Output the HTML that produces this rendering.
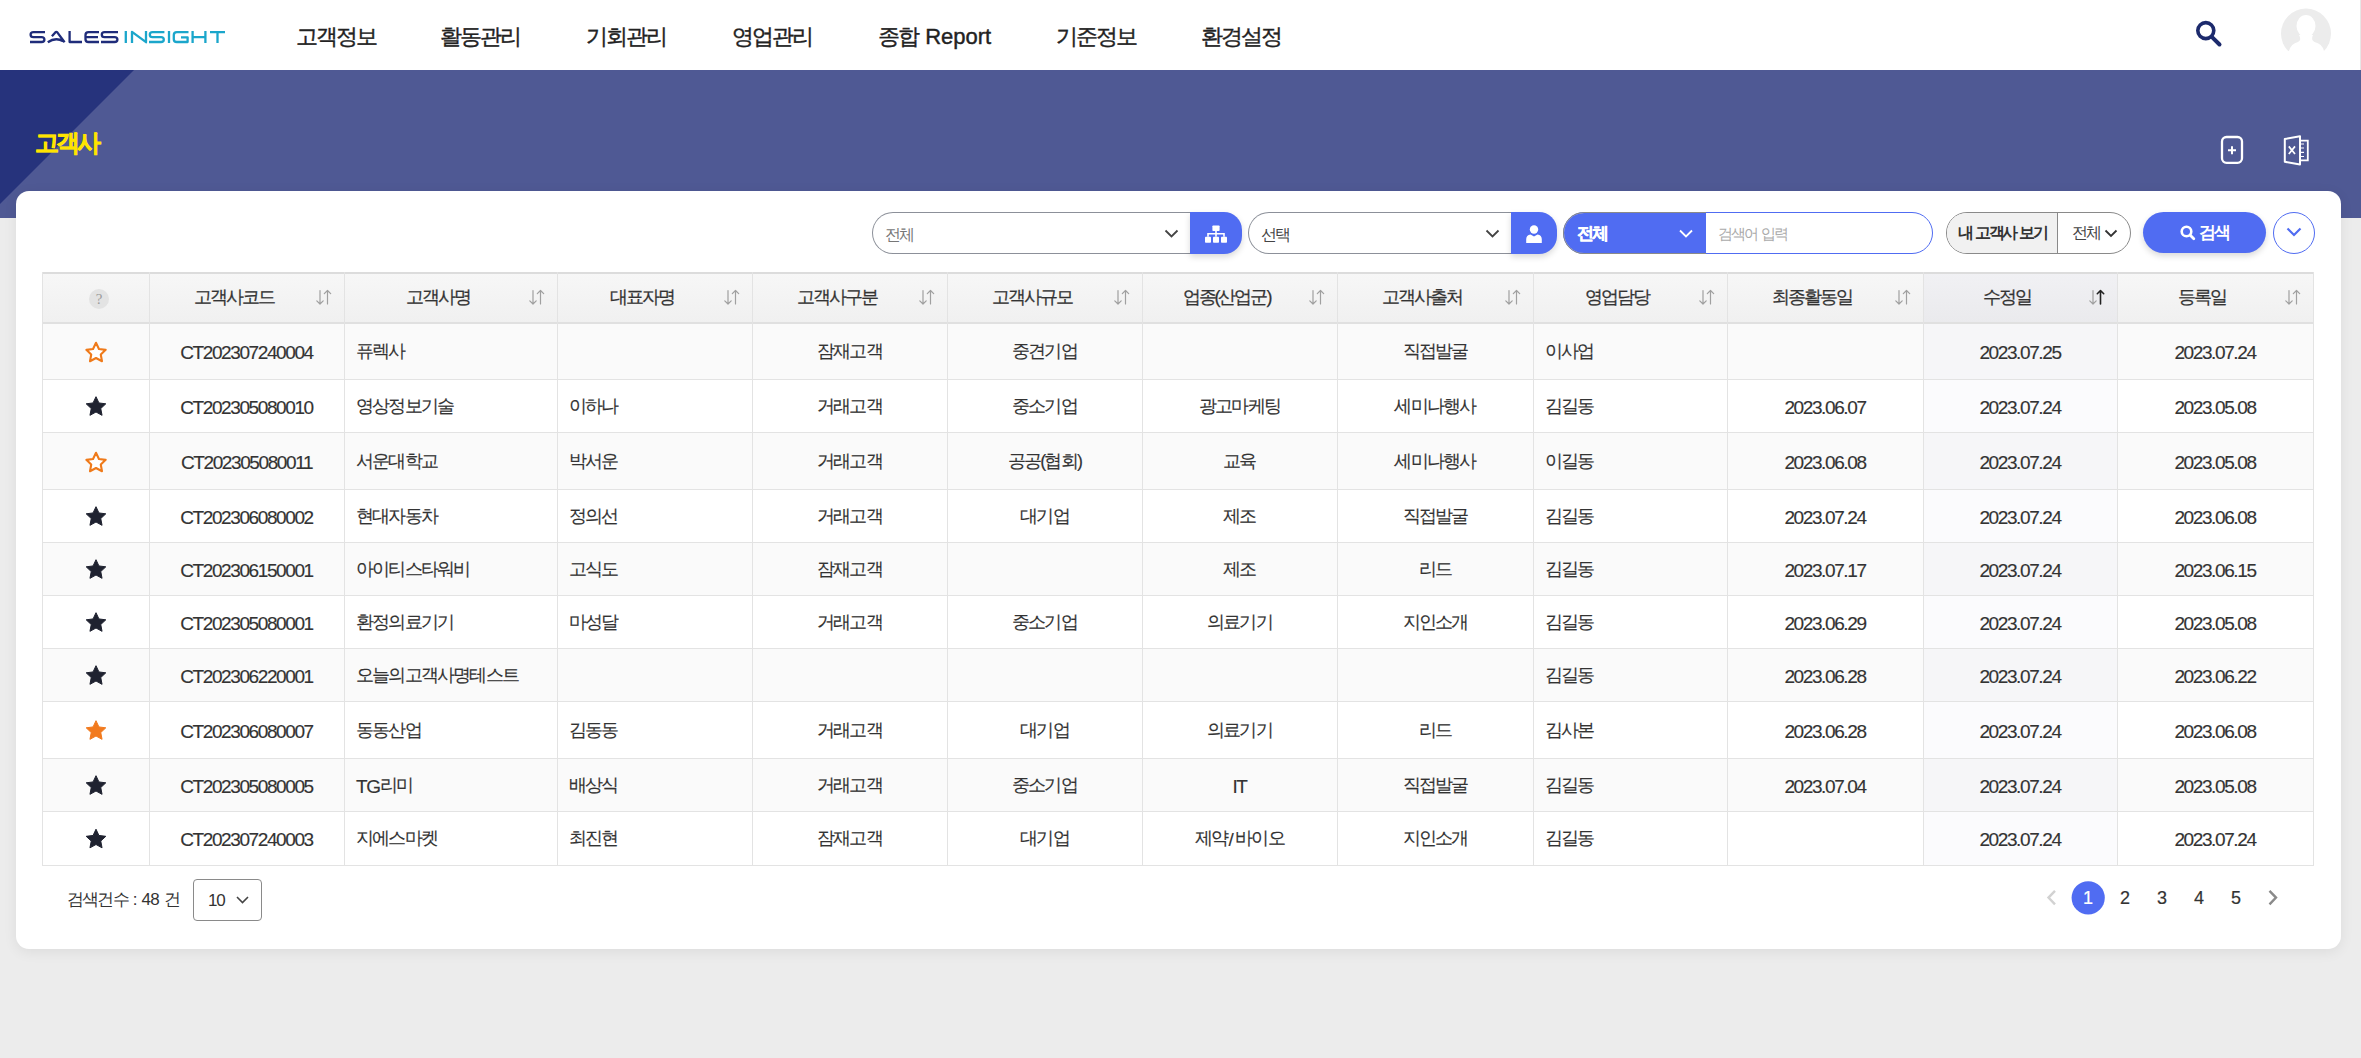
<!DOCTYPE html>
<html><head><meta charset="utf-8">
<style>
*{box-sizing:border-box;margin:0;padding:0}
html,body{width:2361px;height:1058px;overflow:hidden;background:#ececec;font-family:"Liberation Sans",sans-serif;color:#333}
.abs{position:absolute}
.a{letter-spacing:var(--la,0px)}
.sl{letter-spacing:0;margin:0 1.5px 0 1px;position:relative;top:2px;font-size:19px}
#hdr{position:absolute;left:0;top:0;width:2361px;height:70px;background:#fff}
.nav{position:absolute;top:22px;font-size:22px;color:#222;white-space:nowrap;line-height:30px;letter-spacing:-2px;--la:0px;word-spacing:3px;-webkit-text-stroke:0.4px #222}
#banner{position:absolute;left:0;top:70px;width:2361px;height:148px;background:#4f5994;overflow:hidden}
#tri{position:absolute;left:0;top:0;width:0;height:0;border-top:134px solid #26337c;border-right:134px solid transparent}
#title{position:absolute;left:35px;top:127.5px;font-size:23.5px;font-weight:bold;color:#ffe400;line-height:30px;letter-spacing:-3px;-webkit-text-stroke:0.6px #ffe400}
#card{position:absolute;left:16px;top:191px;width:2325px;height:758px;background:#fff;border-radius:13px;box-shadow:0 3px 14px rgba(0,0,0,.07)}
.fb{position:absolute;top:212px;height:42px}
.th{position:absolute;font-size:18px;line-height:24px;text-align:center;color:#333;white-space:nowrap;letter-spacing:-2px;-webkit-text-stroke:0.25px #333;--la:-1px}
.td{position:absolute;font-size:18px;line-height:24px;color:#333;white-space:nowrap;letter-spacing:-1.8px;--la:-1.4px;-webkit-text-stroke:0.15px #333}
.td .a{font-size:19px;position:relative;top:2px}
.pg{position:absolute;top:886px;-webkit-text-stroke:0.2px currentColor;font-size:18px;line-height:24px;color:#333;width:20px;text-align:center}
</style></head><body>
<div id="hdr"></div>
<div class="abs" style="left:2360px;top:0;width:1px;height:70px;background:#e6e6e6"></div>
<svg class="abs" style="left:0;top:0" width="240" height="70" viewBox="0 0 240 70">
<g fill="none" stroke-width="2.3" stroke-linecap="butt" stroke-linejoin="round">
<g stroke="#1f2c7a">
<path d="M45,32.2 H33.5 Q30.6,32.2 30.6,34.8 Q30.6,37.2 33.5,37.2 H41.5 Q44.4,37.2 44.4,39.7 Q44.4,42 41.5,42 H30"/>
<path d="M51.9,36.3 L55.3,32.4 Q56.3,31.4 57.3,32.4 L64.6,42.3 M47.8,42.3 Q55.5,36.8 63.2,41.2"/>
<path d="M69.6,31 V42 H82"/>
<path d="M99,32.2 H88.5 Q85.5,32.2 85.5,35 V39.2 Q85.5,42 88.5,42 H99 M86.5,37.2 H98"/>
<path d="M118,32.2 H104.5 Q101.8,32.2 101.8,34.8 Q101.8,37.2 104.5,37.2 H114.5 Q117.4,37.2 117.4,39.7 Q117.4,42 114.5,42 H101"/>
</g>
<g stroke="#1ba6cb">
<path d="M125.8,31 V43"/>
<path d="M132,43 V31.8 L146,42.2 V31"/>
<path d="M164.4,32.2 H152.5 Q149.8,32.2 149.8,34.8 Q149.8,37.2 152.5,37.2 H161 Q163.8,37.2 163.8,39.7 Q163.8,42 161,42 H149"/>
<path d="M169,31 V43"/>
<path d="M188.5,32.2 H176.8 Q173.8,32.2 173.8,35 V39.2 Q173.8,42 176.8,42 H187.6 V37.3 H181"/>
<path d="M192.6,31 V43 M205.4,31 V43 M192.6,37.2 H205.4"/>
<path d="M210,32.2 H225 M217.5,32.2 V43"/>
</g></g></svg>
<div class="nav" style="left:296px">고객정보</div>
<div class="nav" style="left:440px">활동관리</div>
<div class="nav" style="left:586px">기회관리</div>
<div class="nav" style="left:732px">영업관리</div>
<div class="nav" style="left:878px">종합 <span class="a">Report</span></div>
<div class="nav" style="left:1056px">기준정보</div>
<div class="nav" style="left:1201px">환경설정</div>
<svg class="abs" style="left:2180px;top:0" width="181" height="70" viewBox="2180 0 181 70">
<circle cx="2205.8" cy="30.6" r="8" fill="none" stroke="#1c2a6c" stroke-width="3.6"/>
<path d="M2211.8,36.8 L2219.5,44.5" stroke="#1c2a6c" stroke-width="4" stroke-linecap="round"/>
<defs><clipPath id="avc"><circle cx="2306" cy="33.6" r="25"/></clipPath></defs>
<g clip-path="url(#avc)">
<rect x="2281" y="8" width="50" height="43" fill="#ececec"/>
<rect x="2281" y="51" width="50" height="10" fill="#fff"/>
<ellipse cx="2306" cy="26" rx="9.5" ry="11" fill="#fff"/>
<path d="M2299,35 Q2302,40 2298,42 Q2291,43.5 2289,51 H2324 Q2322,43.5 2314.5,42 Q2310.5,40 2313,35 Z" fill="#fff"/>
</g>
</svg>
<div id="banner"><div id="tri"></div></div>
<div id="title">고객사</div>
<svg class="abs" style="left:2200px;top:120px" width="140" height="60" viewBox="2200 120 140 60">
<rect x="2222" y="137" width="20" height="25.8" rx="4.5" fill="none" stroke="#fff" stroke-width="2.3"/>
<path d="M2232,146.2 V154.2 M2228,150.2 H2236" stroke="#fff" stroke-width="2"/>
<path d="M2284.8,139 L2300,136.2 V164.6 L2284.8,161.8 Z" fill="none" stroke="#fff" stroke-width="2" stroke-linejoin="round"/>
<path d="M2300,140.6 H2307.8 V160.4 H2300" fill="none" stroke="#fff" stroke-width="1.8"/>
<path d="M2300.5,144 H2304 M2300.5,148 H2304 M2300.5,152.3 H2304 M2300.5,156.5 H2304" stroke="#fff" stroke-width="1.2"/>
<path d="M2288.8,146.4 L2295,154 M2295,146.4 L2288.8,154" stroke="#fff" stroke-width="1.7"/>
</svg>
<div id="card"></div>
<!-- filter bar -->
<div class="fb" style="left:872px;width:330px;border:1.5px solid #8c9099;border-right:none;border-radius:21px 0 0 21px;background:#fff"></div>
<div class="abs" style="left:885px;top:223.5px;font-size:15.5px;line-height:22px;color:#777;letter-spacing:-1.8px">전체</div>
<svg class="abs" style="left:1160px;top:222px" width="24" height="24"><path d="M5.5,8.5 L11.5,14.5 L17.5,8.5" fill="none" stroke="#444" stroke-width="1.8"/></svg>
<div class="fb" style="left:1190px;width:52px;background:#506cf2;border-radius:0 18px 18px 0;box-shadow:0 3px 6px rgba(0,0,0,.15)"></div>
<svg class="abs" style="left:1190px;top:212px" width="52" height="42" viewBox="1190 212 52 42">
<g fill="#fff"><rect x="1212.4" y="225.4" width="7.2" height="5.6" rx="0.8"/>
<rect x="1205" y="236.8" width="6" height="6" rx="0.8"/><rect x="1213" y="236.8" width="6" height="6" rx="0.8"/><rect x="1221" y="236.8" width="6" height="6" rx="0.8"/></g>
<path d="M1216,231 V236.8 M1208,236.8 V233.8 H1224 V236.8" fill="none" stroke="#fff" stroke-width="1.6"/>
</svg>
<div class="fb" style="left:1248px;width:280px;border:1.5px solid #8c9099;border-right:none;border-radius:21px 0 0 21px;background:#fff"></div>
<div class="abs" style="left:1261px;top:223.5px;font-size:15.5px;line-height:22px;color:#444;letter-spacing:-1.8px">선택</div>
<svg class="abs" style="left:1481px;top:222px" width="24" height="24"><path d="M5.5,8.5 L11.5,14.5 L17.5,8.5" fill="none" stroke="#444" stroke-width="1.8"/></svg>
<div class="fb" style="left:1511px;width:46px;background:#506cf2;border-radius:0 18px 18px 0;box-shadow:0 3px 6px rgba(0,0,0,.15)"></div>
<svg class="abs" style="left:1511px;top:212px" width="46" height="42" viewBox="1511 212 46 42">
<circle cx="1534" cy="229.5" r="4.2" fill="#fff"/>
<path d="M1526.2,243 V239.2 Q1526.2,235.2 1530.5,234.5 L1534,236.5 L1537.5,234.5 Q1541.8,235.2 1541.8,239.2 V243 Z" fill="#fff"/>
</svg>
<div class="fb" style="left:1563px;width:370px;border:1.3px solid #506cf2;border-radius:21px;background:#fff;overflow:hidden">
<div style="position:absolute;left:0;top:0;width:142px;height:100%;background:#506cf2"></div></div>
<div class="fb" style="left:1563px;width:143px;border:1.2px solid #8a8a8a;border-right:none;border-radius:21px 0 0 21px"></div>
<div class="abs" style="left:1577px;top:223px;font-size:17px;line-height:22px;color:#fff;font-weight:bold;letter-spacing:-2px;-webkit-text-stroke:0.3px #fff">전체</div>
<svg class="abs" style="left:1674px;top:222px" width="24" height="24"><path d="M6,8.5 L12,14.5 L18,8.5" fill="none" stroke="#fff" stroke-width="1.8"/></svg>
<div class="abs" style="left:1718px;top:223px;font-size:15px;line-height:22px;color:#aaa;letter-spacing:-2px;word-spacing:2px">검색어 입력</div>
<div class="fb" style="left:1946px;width:185px;border:1.3px solid #8a8a8a;border-radius:21px;background:#fff;overflow:hidden">
<div style="position:absolute;left:0;top:0;width:111px;height:100%;background:#f1f1f1;border-right:1.3px solid #8a8a8a"></div></div>
<div class="abs" style="left:1958px;top:222px;font-size:16px;line-height:22px;color:#333;font-weight:bold;letter-spacing:-2.6px;word-spacing:2px">내 고객사 보기</div>
<div class="abs" style="left:2072px;top:222px;font-size:16px;line-height:22px;color:#444;letter-spacing:-2px">전체</div>
<svg class="abs" style="left:2102px;top:222px" width="20" height="24"><path d="M3.5,8.5 L9,14 L14.5,8.5" fill="none" stroke="#333" stroke-width="1.8"/></svg>
<div class="fb" style="left:2143px;width:123px;top:212px;height:41px;background:#506cf2;border-radius:21px;box-shadow:0 3px 6px rgba(0,0,0,.15)"></div>
<svg class="abs" style="left:2175px;top:220px" width="26" height="26"><circle cx="11.5" cy="11.5" r="4.8" fill="none" stroke="#fff" stroke-width="2.6"/><path d="M15,15 L18.8,18.8" stroke="#fff" stroke-width="2.8" stroke-linecap="round"/></svg>
<div class="abs" style="left:2199px;top:222px;font-size:17px;line-height:22px;color:#fff;font-weight:bold;letter-spacing:-2.5px">검색</div>
<div class="fb" style="left:2273px;width:42px;border:1.3px solid #506cf2;border-radius:50%;background:#fff"></div>
<svg class="abs" style="left:2273px;top:212px" width="42" height="42"><path d="M14.5,16.5 L21,23 L27.5,16.5" fill="none" stroke="#506cf2" stroke-width="2.2"/></svg>

<div class="abs" style="left:42px;top:272px;width:2272px;height:50px;background:linear-gradient(#f7f7f7,#f0f0f0)"></div>
<div class="abs" style="left:42px;top:322px;width:2272px;height:57px;background:#fafafa"></div>
<div class="abs" style="left:42px;top:379px;width:2272px;height:53px;background:#fff"></div>
<div class="abs" style="left:42px;top:432px;width:2272px;height:57px;background:#fafafa"></div>
<div class="abs" style="left:42px;top:489px;width:2272px;height:53px;background:#fff"></div>
<div class="abs" style="left:42px;top:542px;width:2272px;height:53px;background:#fafafa"></div>
<div class="abs" style="left:42px;top:595px;width:2272px;height:53px;background:#fff"></div>
<div class="abs" style="left:42px;top:648px;width:2272px;height:53px;background:#fafafa"></div>
<div class="abs" style="left:42px;top:701px;width:2272px;height:57px;background:#fff"></div>
<div class="abs" style="left:42px;top:758px;width:2272px;height:53px;background:#fafafa"></div>
<div class="abs" style="left:42px;top:811px;width:2272px;height:54px;background:#fff"></div>
<div class="abs" style="left:1923px;top:272px;width:194px;height:50px;background:rgba(80,90,160,0.035)"></div>
<div class="abs" style="left:1923px;top:322px;width:194px;height:543px;background:rgba(80,90,160,0.025)"></div>
<div class="abs" style="left:42px;top:272px;width:2272px;height:2px;background:#dcdcdc"></div>
<div class="abs" style="left:42px;top:322px;width:2272px;height:1px;background:#e3e3e3"></div>
<div class="abs" style="left:42px;top:379px;width:2272px;height:1px;background:#e3e3e3"></div>
<div class="abs" style="left:42px;top:432px;width:2272px;height:1px;background:#e3e3e3"></div>
<div class="abs" style="left:42px;top:489px;width:2272px;height:1px;background:#e3e3e3"></div>
<div class="abs" style="left:42px;top:542px;width:2272px;height:1px;background:#e3e3e3"></div>
<div class="abs" style="left:42px;top:595px;width:2272px;height:1px;background:#e3e3e3"></div>
<div class="abs" style="left:42px;top:648px;width:2272px;height:1px;background:#e3e3e3"></div>
<div class="abs" style="left:42px;top:701px;width:2272px;height:1px;background:#e3e3e3"></div>
<div class="abs" style="left:42px;top:758px;width:2272px;height:1px;background:#e3e3e3"></div>
<div class="abs" style="left:42px;top:811px;width:2272px;height:1px;background:#e3e3e3"></div>
<div class="abs" style="left:42px;top:865px;width:2272px;height:1px;background:#e3e3e3"></div>
<div class="abs" style="left:42px;top:322px;width:2272px;height:2px;background:#e0e0e0"></div>
<div class="abs" style="left:42px;top:272px;width:1px;height:594px;background:#e3e3e3"></div>
<div class="abs" style="left:149px;top:272px;width:1px;height:594px;background:#e3e3e3"></div>
<div class="abs" style="left:344px;top:272px;width:1px;height:594px;background:#e3e3e3"></div>
<div class="abs" style="left:557px;top:272px;width:1px;height:594px;background:#e3e3e3"></div>
<div class="abs" style="left:752px;top:272px;width:1px;height:594px;background:#e3e3e3"></div>
<div class="abs" style="left:947px;top:272px;width:1px;height:594px;background:#e3e3e3"></div>
<div class="abs" style="left:1142px;top:272px;width:1px;height:594px;background:#e3e3e3"></div>
<div class="abs" style="left:1337px;top:272px;width:1px;height:594px;background:#e3e3e3"></div>
<div class="abs" style="left:1533px;top:272px;width:1px;height:594px;background:#e3e3e3"></div>
<div class="abs" style="left:1727px;top:272px;width:1px;height:594px;background:#e3e3e3"></div>
<div class="abs" style="left:1923px;top:272px;width:1px;height:594px;background:#e3e3e3"></div>
<div class="abs" style="left:2117px;top:272px;width:1px;height:594px;background:#e3e3e3"></div>
<div class="abs" style="left:2313px;top:272px;width:1px;height:594px;background:#e3e3e3"></div>
<div class="th" style="left:149px;width:169px;top:285px">고객사코드</div>
<div class="th" style="left:344px;width:187px;top:285px">고객사명</div>
<div class="th" style="left:557px;width:169px;top:285px">대표자명</div>
<div class="th" style="left:752px;width:169px;top:285px">고객사구분</div>
<div class="th" style="left:947px;width:169px;top:285px">고객사규모</div>
<div class="th" style="left:1142px;width:169px;top:285px">업종(산업군)</div>
<div class="th" style="left:1337px;width:170px;top:285px">고객사출처</div>
<div class="th" style="left:1533px;width:168px;top:285px">영업담당</div>
<div class="th" style="left:1727px;width:170px;top:285px">최종활동일</div>
<div class="th" style="left:1923px;width:168px;top:285px">수정일</div>
<div class="th" style="left:2117px;width:170px;top:285px">등록일</div>
<div class="abs" style="left:89px;top:289px;width:20px;height:20px;border-radius:50%;background:#e3e3e3;color:#9c9c9c;font-family:Liberation Serif,serif;font-size:15px;line-height:21px;text-align:center">?</div>
<div class="td" style="left:149px;width:195px;text-align:center;top:338.5px"><span class="a">CT202307240004</span></div>
<div class="td" style="left:356px;top:338.5px">퓨렉사</div>
<div class="td" style="left:752px;width:195px;text-align:center;top:338.5px">잠재고객</div>
<div class="td" style="left:947px;width:195px;text-align:center;top:338.5px">중견기업</div>
<div class="td" style="left:1337px;width:196px;text-align:center;top:338.5px">직접발굴</div>
<div class="td" style="left:1545px;top:338.5px">이사업</div>
<div class="td" style="left:1923px;width:194px;text-align:center;top:338.5px"><span class="a">2023.07.25</span></div>
<div class="td" style="left:2117px;width:196px;text-align:center;top:338.5px"><span class="a">2023.07.24</span></div>
<div class="td" style="left:149px;width:195px;text-align:center;top:393.5px"><span class="a">CT202305080010</span></div>
<div class="td" style="left:356px;top:393.5px">영상정보기술</div>
<div class="td" style="left:569px;top:393.5px">이하나</div>
<div class="td" style="left:752px;width:195px;text-align:center;top:393.5px">거래고객</div>
<div class="td" style="left:947px;width:195px;text-align:center;top:393.5px">중소기업</div>
<div class="td" style="left:1142px;width:195px;text-align:center;top:393.5px">광고마케팅</div>
<div class="td" style="left:1337px;width:196px;text-align:center;top:393.5px">세미나행사</div>
<div class="td" style="left:1545px;top:393.5px">김길동</div>
<div class="td" style="left:1727px;width:196px;text-align:center;top:393.5px"><span class="a">2023.06.07</span></div>
<div class="td" style="left:1923px;width:194px;text-align:center;top:393.5px"><span class="a">2023.07.24</span></div>
<div class="td" style="left:2117px;width:196px;text-align:center;top:393.5px"><span class="a">2023.05.08</span></div>
<div class="td" style="left:149px;width:195px;text-align:center;top:448.5px"><span class="a">CT202305080011</span></div>
<div class="td" style="left:356px;top:448.5px">서운대학교</div>
<div class="td" style="left:569px;top:448.5px">박서운</div>
<div class="td" style="left:752px;width:195px;text-align:center;top:448.5px">거래고객</div>
<div class="td" style="left:947px;width:195px;text-align:center;top:448.5px">공공(협회)</div>
<div class="td" style="left:1142px;width:195px;text-align:center;top:448.5px">교육</div>
<div class="td" style="left:1337px;width:196px;text-align:center;top:448.5px">세미나행사</div>
<div class="td" style="left:1545px;top:448.5px">이길동</div>
<div class="td" style="left:1727px;width:196px;text-align:center;top:448.5px"><span class="a">2023.06.08</span></div>
<div class="td" style="left:1923px;width:194px;text-align:center;top:448.5px"><span class="a">2023.07.24</span></div>
<div class="td" style="left:2117px;width:196px;text-align:center;top:448.5px"><span class="a">2023.05.08</span></div>
<div class="td" style="left:149px;width:195px;text-align:center;top:503.5px"><span class="a">CT202306080002</span></div>
<div class="td" style="left:356px;top:503.5px">현대자동차</div>
<div class="td" style="left:569px;top:503.5px">정의선</div>
<div class="td" style="left:752px;width:195px;text-align:center;top:503.5px">거래고객</div>
<div class="td" style="left:947px;width:195px;text-align:center;top:503.5px">대기업</div>
<div class="td" style="left:1142px;width:195px;text-align:center;top:503.5px">제조</div>
<div class="td" style="left:1337px;width:196px;text-align:center;top:503.5px">직접발굴</div>
<div class="td" style="left:1545px;top:503.5px">김길동</div>
<div class="td" style="left:1727px;width:196px;text-align:center;top:503.5px"><span class="a">2023.07.24</span></div>
<div class="td" style="left:1923px;width:194px;text-align:center;top:503.5px"><span class="a">2023.07.24</span></div>
<div class="td" style="left:2117px;width:196px;text-align:center;top:503.5px"><span class="a">2023.06.08</span></div>
<div class="td" style="left:149px;width:195px;text-align:center;top:556.5px"><span class="a">CT202306150001</span></div>
<div class="td" style="left:356px;top:556.5px">아이티스타워비</div>
<div class="td" style="left:569px;top:556.5px">고식도</div>
<div class="td" style="left:752px;width:195px;text-align:center;top:556.5px">잠재고객</div>
<div class="td" style="left:1142px;width:195px;text-align:center;top:556.5px">제조</div>
<div class="td" style="left:1337px;width:196px;text-align:center;top:556.5px">리드</div>
<div class="td" style="left:1545px;top:556.5px">김길동</div>
<div class="td" style="left:1727px;width:196px;text-align:center;top:556.5px"><span class="a">2023.07.17</span></div>
<div class="td" style="left:1923px;width:194px;text-align:center;top:556.5px"><span class="a">2023.07.24</span></div>
<div class="td" style="left:2117px;width:196px;text-align:center;top:556.5px"><span class="a">2023.06.15</span></div>
<div class="td" style="left:149px;width:195px;text-align:center;top:609.5px"><span class="a">CT202305080001</span></div>
<div class="td" style="left:356px;top:609.5px">환정의료기기</div>
<div class="td" style="left:569px;top:609.5px">마성달</div>
<div class="td" style="left:752px;width:195px;text-align:center;top:609.5px">거래고객</div>
<div class="td" style="left:947px;width:195px;text-align:center;top:609.5px">중소기업</div>
<div class="td" style="left:1142px;width:195px;text-align:center;top:609.5px">의료기기</div>
<div class="td" style="left:1337px;width:196px;text-align:center;top:609.5px">지인소개</div>
<div class="td" style="left:1545px;top:609.5px">김길동</div>
<div class="td" style="left:1727px;width:196px;text-align:center;top:609.5px"><span class="a">2023.06.29</span></div>
<div class="td" style="left:1923px;width:194px;text-align:center;top:609.5px"><span class="a">2023.07.24</span></div>
<div class="td" style="left:2117px;width:196px;text-align:center;top:609.5px"><span class="a">2023.05.08</span></div>
<div class="td" style="left:149px;width:195px;text-align:center;top:662.5px"><span class="a">CT202306220001</span></div>
<div class="td" style="left:356px;top:662.5px">오늘의고객사명테스트</div>
<div class="td" style="left:1545px;top:662.5px">김길동</div>
<div class="td" style="left:1727px;width:196px;text-align:center;top:662.5px"><span class="a">2023.06.28</span></div>
<div class="td" style="left:1923px;width:194px;text-align:center;top:662.5px"><span class="a">2023.07.24</span></div>
<div class="td" style="left:2117px;width:196px;text-align:center;top:662.5px"><span class="a">2023.06.22</span></div>
<div class="td" style="left:149px;width:195px;text-align:center;top:717.5px"><span class="a">CT202306080007</span></div>
<div class="td" style="left:356px;top:717.5px">동동산업</div>
<div class="td" style="left:569px;top:717.5px">김동동</div>
<div class="td" style="left:752px;width:195px;text-align:center;top:717.5px">거래고객</div>
<div class="td" style="left:947px;width:195px;text-align:center;top:717.5px">대기업</div>
<div class="td" style="left:1142px;width:195px;text-align:center;top:717.5px">의료기기</div>
<div class="td" style="left:1337px;width:196px;text-align:center;top:717.5px">리드</div>
<div class="td" style="left:1545px;top:717.5px">김사본</div>
<div class="td" style="left:1727px;width:196px;text-align:center;top:717.5px"><span class="a">2023.06.28</span></div>
<div class="td" style="left:1923px;width:194px;text-align:center;top:717.5px"><span class="a">2023.07.24</span></div>
<div class="td" style="left:2117px;width:196px;text-align:center;top:717.5px"><span class="a">2023.06.08</span></div>
<div class="td" style="left:149px;width:195px;text-align:center;top:772.5px"><span class="a">CT202305080005</span></div>
<div class="td" style="left:356px;top:772.5px"><span class="a">TG</span>리미</div>
<div class="td" style="left:569px;top:772.5px">배상식</div>
<div class="td" style="left:752px;width:195px;text-align:center;top:772.5px">거래고객</div>
<div class="td" style="left:947px;width:195px;text-align:center;top:772.5px">중소기업</div>
<div class="td" style="left:1142px;width:195px;text-align:center;top:772.5px"><span class="a">IT</span></div>
<div class="td" style="left:1337px;width:196px;text-align:center;top:772.5px">직접발굴</div>
<div class="td" style="left:1545px;top:772.5px">김길동</div>
<div class="td" style="left:1727px;width:196px;text-align:center;top:772.5px"><span class="a">2023.07.04</span></div>
<div class="td" style="left:1923px;width:194px;text-align:center;top:772.5px"><span class="a">2023.07.24</span></div>
<div class="td" style="left:2117px;width:196px;text-align:center;top:772.5px"><span class="a">2023.05.08</span></div>
<div class="td" style="left:149px;width:195px;text-align:center;top:826.0px"><span class="a">CT202307240003</span></div>
<div class="td" style="left:356px;top:826.0px">지에스마켓</div>
<div class="td" style="left:569px;top:826.0px">최진현</div>
<div class="td" style="left:752px;width:195px;text-align:center;top:826.0px">잠재고객</div>
<div class="td" style="left:947px;width:195px;text-align:center;top:826.0px">대기업</div>
<div class="td" style="left:1142px;width:195px;text-align:center;top:826.0px">제약<span class="sl">/</span>바이오</div>
<div class="td" style="left:1337px;width:196px;text-align:center;top:826.0px">지인소개</div>
<div class="td" style="left:1545px;top:826.0px">김길동</div>
<div class="td" style="left:1923px;width:194px;text-align:center;top:826.0px"><span class="a">2023.07.24</span></div>
<div class="td" style="left:2117px;width:196px;text-align:center;top:826.0px"><span class="a">2023.07.24</span></div>
<svg class="abs" style="left:0;top:0" width="2361" height="1058" viewBox="0 0 2361 1058"><g fill="none" stroke-linecap="round" stroke-linejoin="round"><path d="M320.0,290.5 V304.0 M316.8,300.8 L320.0,304.0 L323.2,300.8" stroke="#a0a0a0" stroke-width="1.2"/><path d="M327.5,304.0 V290.5 M324.3,293.7 L327.5,290.5 L330.7,293.7" stroke="#a0a0a0" stroke-width="1.2"/></g><g fill="none" stroke-linecap="round" stroke-linejoin="round"><path d="M533.0,290.5 V304.0 M529.8,300.8 L533.0,304.0 L536.2,300.8" stroke="#a0a0a0" stroke-width="1.2"/><path d="M540.5,304.0 V290.5 M537.3,293.7 L540.5,290.5 L543.7,293.7" stroke="#a0a0a0" stroke-width="1.2"/></g><g fill="none" stroke-linecap="round" stroke-linejoin="round"><path d="M728.0,290.5 V304.0 M724.8,300.8 L728.0,304.0 L731.2,300.8" stroke="#a0a0a0" stroke-width="1.2"/><path d="M735.5,304.0 V290.5 M732.3,293.7 L735.5,290.5 L738.7,293.7" stroke="#a0a0a0" stroke-width="1.2"/></g><g fill="none" stroke-linecap="round" stroke-linejoin="round"><path d="M923.0,290.5 V304.0 M919.8,300.8 L923.0,304.0 L926.2,300.8" stroke="#a0a0a0" stroke-width="1.2"/><path d="M930.5,304.0 V290.5 M927.3,293.7 L930.5,290.5 L933.7,293.7" stroke="#a0a0a0" stroke-width="1.2"/></g><g fill="none" stroke-linecap="round" stroke-linejoin="round"><path d="M1118.0,290.5 V304.0 M1114.8,300.8 L1118.0,304.0 L1121.2,300.8" stroke="#a0a0a0" stroke-width="1.2"/><path d="M1125.5,304.0 V290.5 M1122.3,293.7 L1125.5,290.5 L1128.7,293.7" stroke="#a0a0a0" stroke-width="1.2"/></g><g fill="none" stroke-linecap="round" stroke-linejoin="round"><path d="M1313.0,290.5 V304.0 M1309.8,300.8 L1313.0,304.0 L1316.2,300.8" stroke="#a0a0a0" stroke-width="1.2"/><path d="M1320.5,304.0 V290.5 M1317.3,293.7 L1320.5,290.5 L1323.7,293.7" stroke="#a0a0a0" stroke-width="1.2"/></g><g fill="none" stroke-linecap="round" stroke-linejoin="round"><path d="M1509.0,290.5 V304.0 M1505.8,300.8 L1509.0,304.0 L1512.2,300.8" stroke="#a0a0a0" stroke-width="1.2"/><path d="M1516.5,304.0 V290.5 M1513.3,293.7 L1516.5,290.5 L1519.7,293.7" stroke="#a0a0a0" stroke-width="1.2"/></g><g fill="none" stroke-linecap="round" stroke-linejoin="round"><path d="M1703.0,290.5 V304.0 M1699.8,300.8 L1703.0,304.0 L1706.2,300.8" stroke="#a0a0a0" stroke-width="1.2"/><path d="M1710.5,304.0 V290.5 M1707.3,293.7 L1710.5,290.5 L1713.7,293.7" stroke="#a0a0a0" stroke-width="1.2"/></g><g fill="none" stroke-linecap="round" stroke-linejoin="round"><path d="M1899.0,290.5 V304.0 M1895.8,300.8 L1899.0,304.0 L1902.2,300.8" stroke="#a0a0a0" stroke-width="1.2"/><path d="M1906.5,304.0 V290.5 M1903.3,293.7 L1906.5,290.5 L1909.7,293.7" stroke="#a0a0a0" stroke-width="1.2"/></g><g fill="none" stroke-linecap="round" stroke-linejoin="round"><path d="M2093.0,290.5 V304.0 M2089.8,300.8 L2093.0,304.0 L2096.2,300.8" stroke="#a0a0a0" stroke-width="1.2"/><path d="M2100.5,304.0 V290.5 M2097.3,293.7 L2100.5,290.5 L2103.7,293.7" stroke="#222" stroke-width="1.6"/></g><g fill="none" stroke-linecap="round" stroke-linejoin="round"><path d="M2289.0,290.5 V304.0 M2285.8,300.8 L2289.0,304.0 L2292.2,300.8" stroke="#a0a0a0" stroke-width="1.2"/><path d="M2296.5,304.0 V290.5 M2293.3,293.7 L2296.5,290.5 L2299.7,293.7" stroke="#a0a0a0" stroke-width="1.2"/></g><polygon points="96.00,342.80 98.94,348.95 105.70,349.85 100.76,354.55 102.00,361.25 96.00,358.00 90.00,361.25 91.24,354.55 86.30,349.85 93.06,348.95" fill="#fff" stroke="#ef7a1a" stroke-width="2.1" stroke-linejoin="round"/><polygon points="96.00,396.70 98.94,402.95 105.80,403.82 100.76,408.55 102.05,415.33 96.00,412.00 89.95,415.33 91.24,408.55 86.20,403.82 93.06,402.95" fill="#1f2230" stroke="#1f2230" stroke-width="1" stroke-linejoin="round"/><polygon points="96.00,452.80 98.94,458.95 105.70,459.85 100.76,464.55 102.00,471.25 96.00,468.00 90.00,471.25 91.24,464.55 86.30,459.85 93.06,458.95" fill="#fff" stroke="#ef7a1a" stroke-width="2.1" stroke-linejoin="round"/><polygon points="96.00,506.70 98.94,512.95 105.80,513.82 100.76,518.55 102.05,525.33 96.00,522.00 89.95,525.33 91.24,518.55 86.20,513.82 93.06,512.95" fill="#1f2230" stroke="#1f2230" stroke-width="1" stroke-linejoin="round"/><polygon points="96.00,559.70 98.94,565.95 105.80,566.82 100.76,571.55 102.05,578.33 96.00,575.00 89.95,578.33 91.24,571.55 86.20,566.82 93.06,565.95" fill="#1f2230" stroke="#1f2230" stroke-width="1" stroke-linejoin="round"/><polygon points="96.00,612.70 98.94,618.95 105.80,619.82 100.76,624.55 102.05,631.33 96.00,628.00 89.95,631.33 91.24,624.55 86.20,619.82 93.06,618.95" fill="#1f2230" stroke="#1f2230" stroke-width="1" stroke-linejoin="round"/><polygon points="96.00,665.70 98.94,671.95 105.80,672.82 100.76,677.55 102.05,684.33 96.00,681.00 89.95,684.33 91.24,677.55 86.20,672.82 93.06,671.95" fill="#1f2230" stroke="#1f2230" stroke-width="1" stroke-linejoin="round"/><polygon points="96.00,720.70 98.94,726.95 105.80,727.82 100.76,732.55 102.05,739.33 96.00,736.00 89.95,739.33 91.24,732.55 86.20,727.82 93.06,726.95" fill="#f27a1e" stroke="#f27a1e" stroke-width="1" stroke-linejoin="round"/><polygon points="96.00,775.70 98.94,781.95 105.80,782.82 100.76,787.55 102.05,794.33 96.00,791.00 89.95,794.33 91.24,787.55 86.20,782.82 93.06,781.95" fill="#1f2230" stroke="#1f2230" stroke-width="1" stroke-linejoin="round"/><polygon points="96.00,829.20 98.94,835.45 105.80,836.32 100.76,841.05 102.05,847.83 96.00,844.50 89.95,847.83 91.24,841.05 86.20,836.32 93.06,835.45" fill="#1f2230" stroke="#1f2230" stroke-width="1" stroke-linejoin="round"/></svg>
<div class="abs" style="left:67px;top:888px;font-size:17px;line-height:24px;color:#333;letter-spacing:-1.8px;--la:-0.8px;word-spacing:2px">검색건수 <span class="a">:</span> <span class="a">48</span> 건</div>
<div class="abs" style="left:193px;top:879px;width:69px;height:42px;border:1.3px solid #8a8a8a;border-radius:4px;background:#fff"></div>
<div class="abs" style="left:208px;top:889px;font-size:17px;line-height:24px;color:#333;--la:-1.2px"><span class="a">10</span></div>
<svg class="abs" style="left:234.5px;top:890.5px" width="16" height="20"><path d="M2,6 L7.5,11.5 L13,6" fill="none" stroke="#444" stroke-width="1.6"/></svg>
<svg class="abs" style="left:2040px;top:880px" width="250" height="40" viewBox="2040 880 250 40">
<path d="M2055,890.8 L2048.5,897.6 L2055,904.4" fill="none" stroke="#d2d2d2" stroke-width="2.4"/>
<circle cx="2088.2" cy="897.8" r="16.6" fill="#506cf2"/>
<path d="M2269.5,890.8 L2276,897.6 L2269.5,904.4" fill="none" stroke="#8a8a8a" stroke-width="2.4"/>
</svg>
<div class="pg" style="left:2078px;color:#fff"><span class="a">1</span></div>
<div class="pg" style="left:2115px"><span class="a">2</span></div>
<div class="pg" style="left:2152px"><span class="a">3</span></div>
<div class="pg" style="left:2189px"><span class="a">4</span></div>
<div class="pg" style="left:2226px"><span class="a">5</span></div>
</body></html>
